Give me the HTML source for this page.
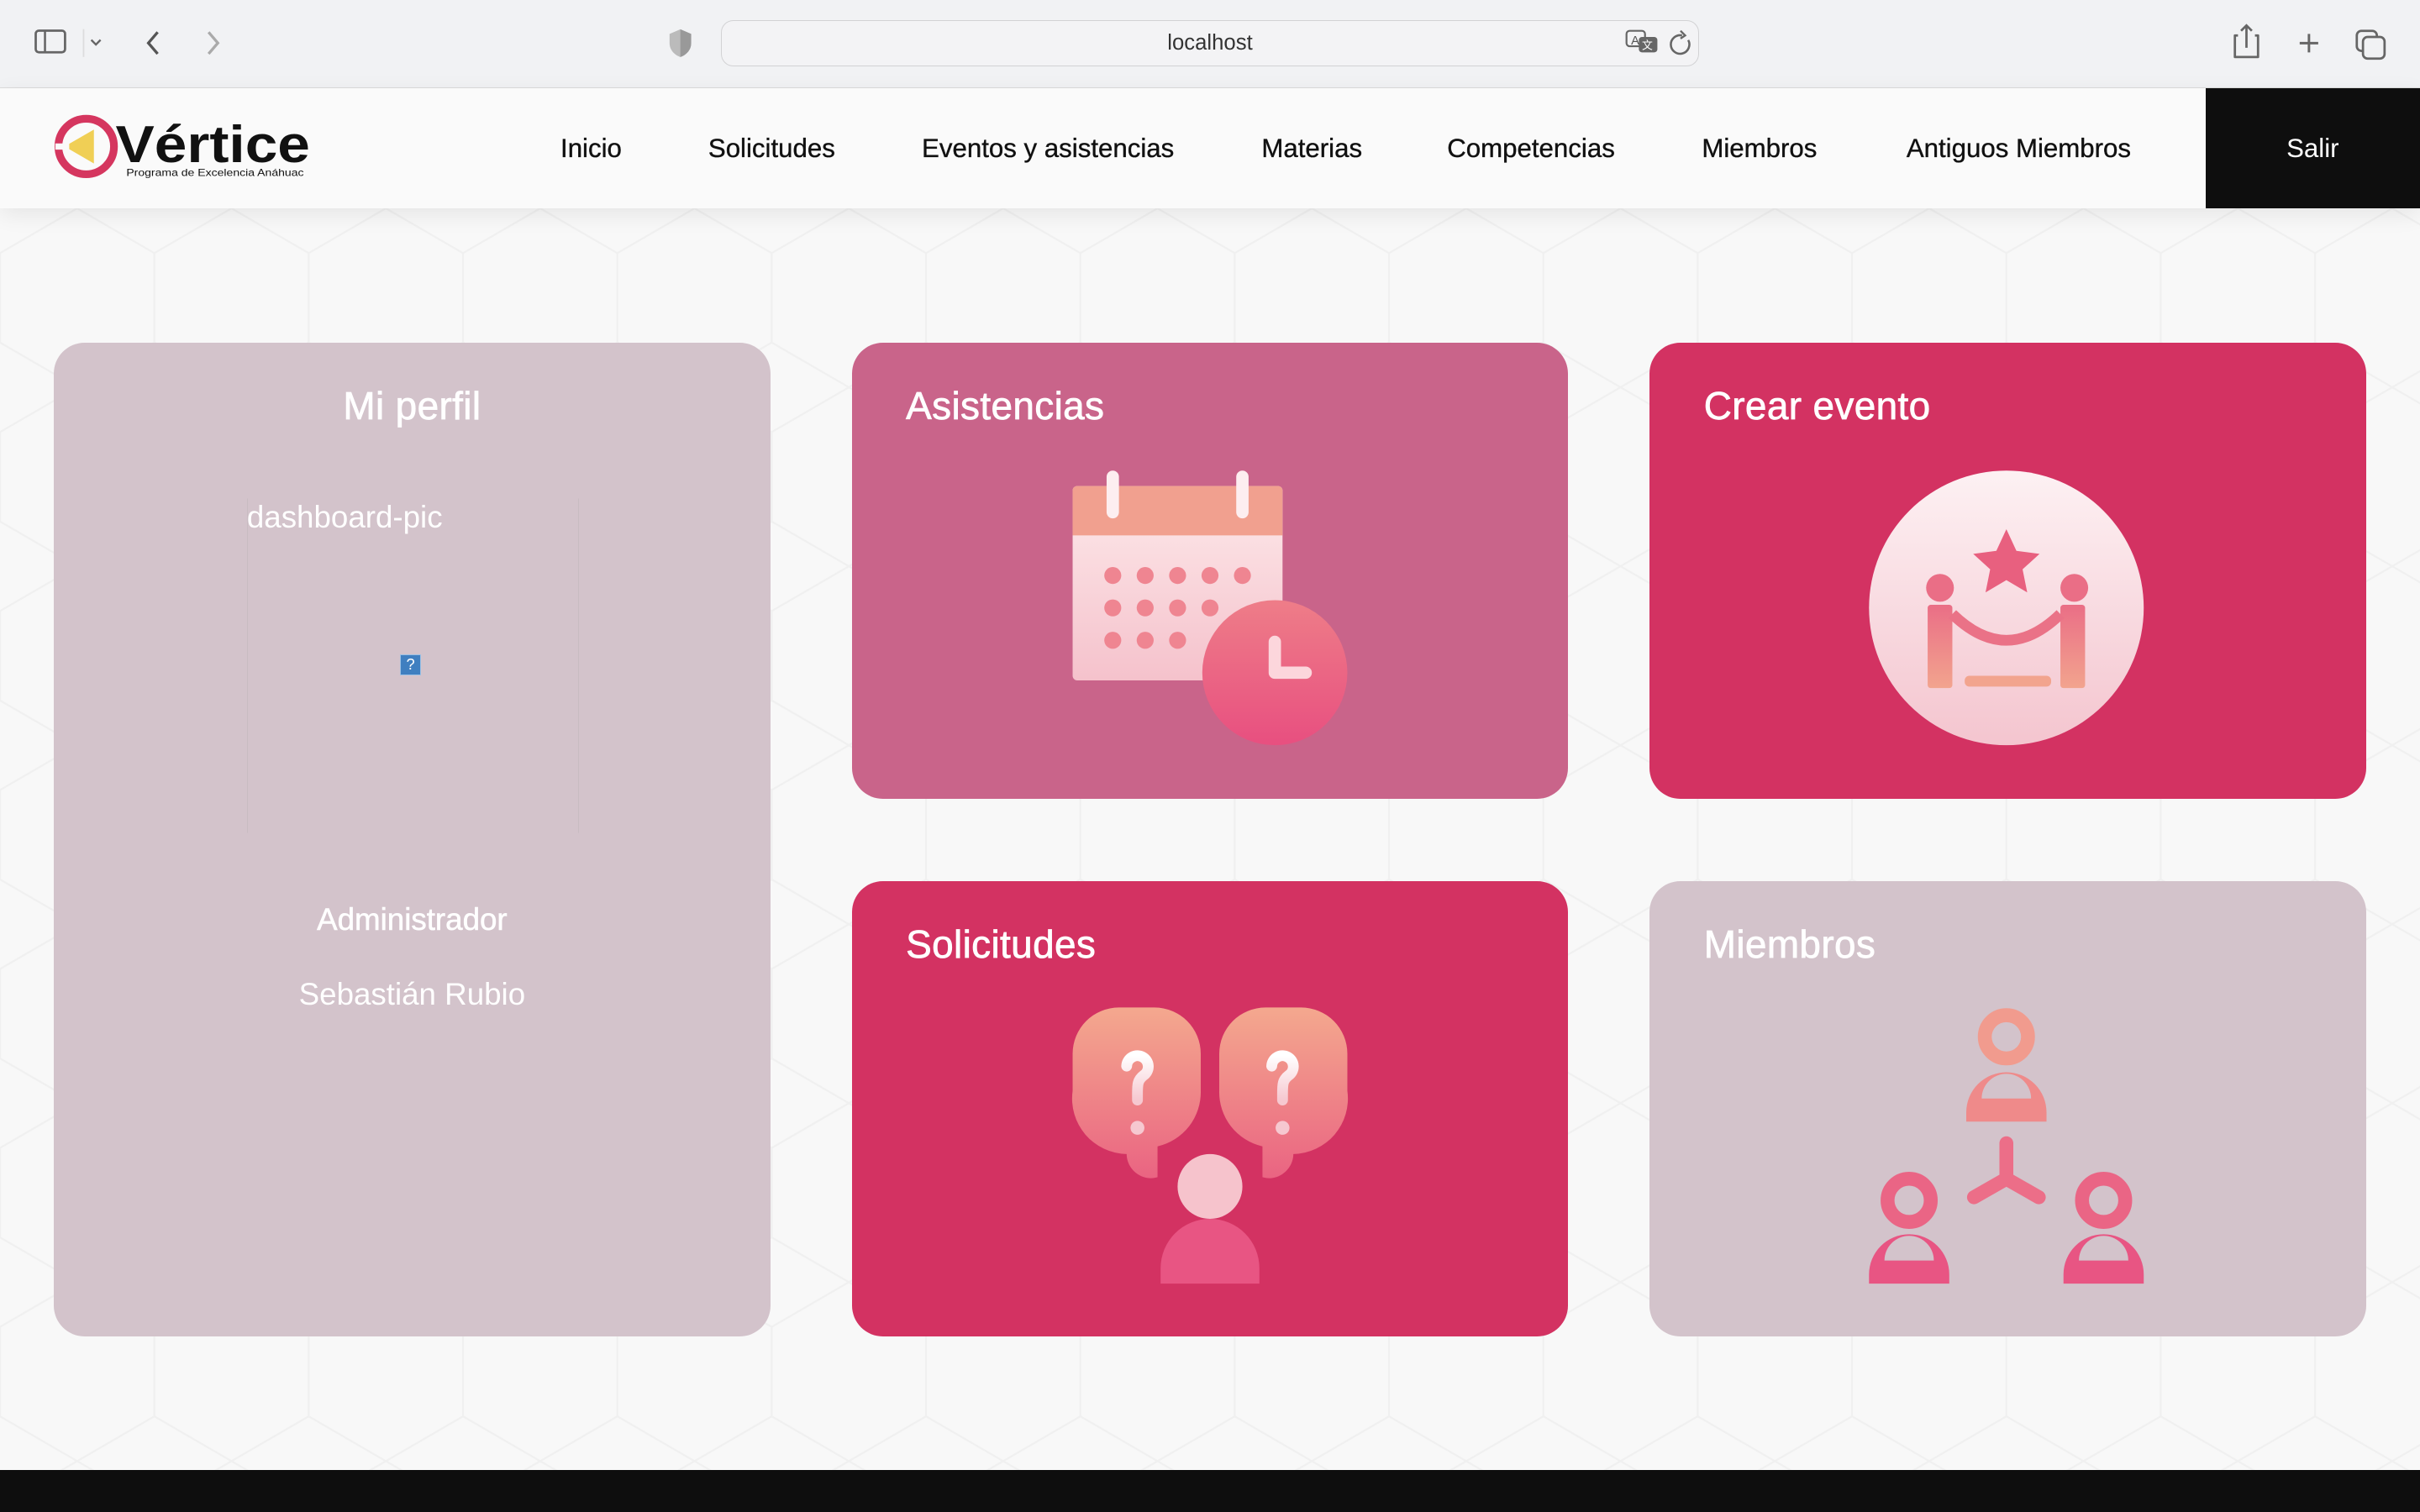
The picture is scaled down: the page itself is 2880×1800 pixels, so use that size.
<!DOCTYPE html>
<html><head><meta charset="utf-8"><style>
html,body{margin:0;padding:0;width:2880px;height:1800px;overflow:hidden;background:#f8f8f8}
#w{zoom:1.836735;width:1568px;height:980px;position:relative;font-family:"Liberation Sans",sans-serif;overflow:hidden}
.abs{position:absolute}
.chrome{left:0;top:0;width:1568px;height:57px;background:#f1f2f4;border-bottom:1px solid #dcdcdc;box-sizing:border-box}
.url{left:467px;top:13px;width:634px;height:30px;border:1px solid #d2d2d4;border-radius:8px;box-sizing:border-box;background:#f3f3f5;text-align:center;font-size:14px;line-height:29px;color:#333}
.nav{left:0;top:57px;width:1568px;height:78px;background:#fafafa;box-shadow:0 4px 14px rgba(0,0,0,.08)}
.nav span{position:absolute;top:0;line-height:78px;font-size:17px;color:#111;transform:translateX(-50%);white-space:nowrap;-webkit-text-stroke:0.2px #111}
.salir{left:1429px;top:57px;width:139px;height:78px;background:#0e0e0e;color:#fff;font-size:17px;line-height:78px;text-align:center}
.card{border-radius:20px;width:464px;color:#fff}
.card h2{margin:0;position:absolute;left:35px;top:26px;font-size:25px;font-weight:normal;letter-spacing:.2px;-webkit-text-stroke:0.4px #fff}
.foot{left:0;top:953px;width:1568px;height:27px;background:#0e0e0e}
</style></head><body><div id="w">
<svg class="abs" style="left:0;top:135px" width="1568" height="818" viewBox="0 0 1568 818">
<defs><pattern id="hx" width="100" height="116" patternUnits="userSpaceOnUse">
<path d="M0 29 L50 0 L100 29 M50 0 V-29 M0 29 V87 L50 116 L100 87 V29 M50 116 V145" fill="none" stroke="#f0f0f0" stroke-width="1.2"/></pattern></defs>
<rect width="1568" height="818" fill="url(#hx)"/></svg>

<div class="abs chrome"></div>
<svg class="abs" style="left:20px;top:17px" width="140" height="22" viewBox="0 0 140 22">
<rect x="3" y="3" width="19" height="14" rx="2" fill="none" stroke="#666" stroke-width="1.5"/><line x1="9" y1="3" x2="9" y2="17" stroke="#666" stroke-width="1.4"/>
<line x1="34" y1="2" x2="34" y2="20" stroke="#ddd"/><path d="M39 9 l3 3 l3 -3" fill="none" stroke="#666" stroke-width="1.3"/>
<path d="M82 4 l-6 7 l6 7" fill="none" stroke="#555" stroke-width="1.8"/><path d="M115 4 l6 7 l-6 7" fill="none" stroke="#aaa" stroke-width="1.8"/></svg>
<svg class="abs" style="left:433px;top:18px" width="16" height="20"><path d="M8 1 L15 4 V10 C15 15 11 18 8 19 C5 18 1 15 1 10 V4 Z" fill="#bbb"/><path d="M8 1 V19 C11 18 15 15 15 10 V4 Z" fill="#999"/></svg>
<div class="abs url">localhost</div>
<svg class="abs" style="left:1052px;top:18px" width="46" height="22"><rect x="2" y="2" width="12" height="10" rx="2" fill="#f3f3f5" stroke="#666" stroke-width="1.2"/><text x="5" y="11" font-size="8" fill="#555" font-family="Liberation Sans">A</text><rect x="10" y="6" width="12" height="10" rx="2" fill="#666"/><text x="12" y="14" font-size="7" fill="#fff">文</text><path d="M42 8 A6 6 0 1 1 38 5" fill="none" stroke="#666" stroke-width="1.4"/><path d="M37 2 l3 3 l-3 2" fill="none" stroke="#666" stroke-width="1.3"/></svg>
<svg class="abs" style="left:1440px;top:12px" width="110" height="30" viewBox="0 0 110 30">
<path d="M10 11 H8 V25 H23 V11 H21" fill="none" stroke="#666" stroke-width="1.5" stroke-linejoin="round"/><path d="M15.5 19 V5 M12 8 l3.5-3.5 l3.5 3.5" fill="none" stroke="#666" stroke-width="1.5"/>
<path d="M56 10 V22 M50 16 H62" stroke="#666" stroke-width="1.6"/>
<rect x="87" y="8" width="13" height="13" rx="3" fill="none" stroke="#666" stroke-width="1.5"/><rect x="91" y="12" width="14" height="14" rx="3" fill="#f1f2f4" stroke="#666" stroke-width="1.5"/></svg>

<div class="abs nav">
<svg style="position:absolute;left:35px;top:16px" width="170" height="46" viewBox="0 0 170 46">
<circle cx="21" cy="22" r="18" fill="none" stroke="#d5365f" stroke-width="5"/><path d="M7 22 L26 11 V33 Z" fill="#f0cf55"/><path d="M1 22 L10 22" stroke="#fafafa" stroke-width="4"/>
<text x="40" y="32" font-size="34" font-weight="bold" font-family="Liberation Sans" fill="#111" textLength="126" lengthAdjust="spacingAndGlyphs">Vértice</text>
<text x="47" y="41" font-size="6.5" fill="#111" font-family="Liberation Sans" textLength="115" lengthAdjust="spacingAndGlyphs">Programa de Excelencia Anáhuac</text></svg>
<span style="left:383px">Inicio</span><span style="left:500px">Solicitudes</span><span style="left:679px">Eventos y asistencias</span><span style="left:850px">Materias</span><span style="left:992px">Competencias</span><span style="left:1140px">Miembros</span><span style="left:1308px">Antiguos Miembros</span>
</div>
<div class="abs salir">Salir</div>

<div class="abs card" style="left:35px;top:222px;height:644px;background:#d3c3cb">
<h2 style="left:0;width:464px;text-align:center">Mi perfil</h2>
<div style="position:absolute;left:125px;top:101px;width:215px;height:217px;border:1px solid #c8bcc2;box-sizing:border-box;border-top-color:transparent;border-bottom-color:transparent"></div>
<div style="position:absolute;left:125px;top:102px;font-size:20px">dashboard-pic</div>
<div style="position:absolute;left:224px;top:202px;width:14px;height:14px;background:#3f7fc0;border:1px solid #9cc1e4;box-sizing:border-box;font-size:10px;line-height:12px;text-align:center">?</div>
<div style="position:absolute;left:0;width:464px;top:363px;text-align:center;font-size:20px;-webkit-text-stroke:0.3px #fff">Administrador</div>
<div style="position:absolute;left:0;width:464px;top:411px;text-align:center;font-size:20px">Sebastián Rubio</div>
</div>

<div class="abs card" style="left:552px;top:222px;height:296px;background:#c9648a"><h2>Asistencias</h2></div>
<div class="abs card" style="left:1069px;top:222px;height:296px;background:#d33262"><h2>Crear evento</h2></div>
<div class="abs card" style="left:552px;top:571px;height:295px;background:#d33262"><h2>Solicitudes</h2></div>
<div class="abs card" style="left:1069px;top:571px;height:295px;background:#d3c3cb"><h2>Miembros</h2></div>

<svg class="abs" style="left:0;top:0" width="1568" height="980" viewBox="0 0 1568 980">
<defs>
<linearGradient id="cb" x1="0" y1="0" x2="0" y2="1"><stop offset="0" stop-color="#fde9ea"/><stop offset="1" stop-color="#f5c2cc"/></linearGradient>
<linearGradient id="ck" x1="0" y1="0" x2="0" y2="1"><stop offset="0" stop-color="#ee7d88"/><stop offset="1" stop-color="#e84f80"/></linearGradient>
<linearGradient id="ce" x1="0" y1="0" x2="0" y2="1"><stop offset="0" stop-color="#fdf1f3"/><stop offset="1" stop-color="#f4c5cf"/></linearGradient>
<linearGradient id="po" x1="0" y1="0" x2="0" y2="1"><stop offset="0" stop-color="#ea6e86"/><stop offset="1" stop-color="#f2a48e"/></linearGradient>
<linearGradient id="bu" x1="0" y1="0" x2="0" y2="1"><stop offset="0" stop-color="#f4a88e"/><stop offset="1" stop-color="#ea6482"/></linearGradient>
<linearGradient id="qm" x1="0" y1="0" x2="0" y2="1"><stop offset="0" stop-color="#fff"/><stop offset="1" stop-color="#f6c8d0"/></linearGradient>
</defs>
<rect x="695" y="315" width="136" height="126" rx="3" fill="url(#cb)"/>
<path d="M698 315 H828 a3 3 0 0 1 3 3 V347 H695 V318 a3 3 0 0 1 3-3Z" fill="#f1a08f"/>
<line x1="721" y1="309" x2="721" y2="332" stroke="#fdeef0" stroke-width="8" stroke-linecap="round"/>
<line x1="805" y1="309" x2="805" y2="332" stroke="#fdeef0" stroke-width="8" stroke-linecap="round"/>
<g fill="#ef8591"><circle cx="721" cy="373" r="5.5"/><circle cx="742" cy="373" r="5.5"/><circle cx="763" cy="373" r="5.5"/><circle cx="784" cy="373" r="5.5"/><circle cx="805" cy="373" r="5.5"/>
<circle cx="721" cy="394" r="5.5"/><circle cx="742" cy="394" r="5.5"/><circle cx="763" cy="394" r="5.5"/><circle cx="784" cy="394" r="5.5"/>
<circle cx="721" cy="415" r="5.5"/><circle cx="742" cy="415" r="5.5"/><circle cx="763" cy="415" r="5.5"/></g>
<circle cx="826" cy="436" r="47" fill="url(#ck)"/>
<path d="M826 416 V436 H846" fill="none" stroke="#fcd6dc" stroke-width="8" stroke-linecap="round" stroke-linejoin="round"/>
<circle cx="1300" cy="394" r="89" fill="url(#ce)"/>
<path d="M1300 343 l6.5 14 l15 2 l-11 10 l3 15 l-13.5-8 l-13.5 8 l3-15 l-11-10 l15-2Z" fill="#e8607f"/>
<circle cx="1257" cy="381" r="9" fill="#ea6e86"/><circle cx="1344" cy="381" r="9" fill="#ea6e86"/>
<rect x="1249" y="392" width="16" height="54" rx="2" fill="url(#po)"/><rect x="1335" y="392" width="16" height="54" rx="2" fill="url(#po)"/>
<path d="M1265 398 Q1300 432 1335 398" fill="none" stroke="#ea7287" stroke-width="7"/>
<rect x="1273" y="438" width="56" height="7" rx="3" fill="#f2a48e"/>
<path d="M725 653 h23 a30 30 0 0 1 30 30 v24 a36 36 0 0 1 -28 36 v20 c-10 3 -20 -5 -20 -15 a36 36 0 0 1 -35 -41 v-24 a30 30 0 0 1 30 -30Z" fill="url(#bu)"/>
<path d="M820 653 h23 a30 30 0 0 1 30 30 v24 a36 36 0 0 1 -35 41 c0 10 -10 18 -20 15 v-20 a36 36 0 0 1 -28 -36 v-24 a30 30 0 0 1 30 -30Z" fill="url(#bu)"/>
<path d="M730 691 a7 7 0 1 1 11 6 c-4 3 -4 6 -4 12 v4" fill="none" stroke="url(#qm)" stroke-width="7" stroke-linecap="round"/>
<circle cx="737" cy="731" r="4.5" fill="#f6c8d0"/>
<path d="M824 691 a7 7 0 1 1 11 6 c-4 3 -4 6 -4 12 v4" fill="none" stroke="url(#qm)" stroke-width="7" stroke-linecap="round"/>
<circle cx="831" cy="731" r="4.5" fill="#f6c8d0"/>
<circle cx="784" cy="769" r="21" fill="#f6c3cc"/>
<path d="M752 832 V822 a32 32 0 0 1 64 0 V832Z" fill="#e85583"/>
<g fill="none" stroke-width="9">
<circle cx="1300" cy="672" r="14" stroke="#f19b8e"/>
<circle cx="1237" cy="778" r="14" stroke="#ea6585"/>
<circle cx="1363" cy="778" r="14" stroke="#ea6585"/>
<path d="M1300 741 V764 M1300 764 L1279 776 M1300 764 L1321 776" stroke="#ec6e88" stroke-linecap="round"/>
</g>
<path d="M1274 727 v-6 a26 26 0 0 1 52 0 v6Z M1284 712 h32 a16 16 0 0 0 -32 0Z" fill="#ef8a8a" fill-rule="evenodd"/>
<path d="M1211 832 v-6 a26 26 0 0 1 52 0 v6Z M1221 817 h32 a16 16 0 0 0 -32 0Z" fill="#e85583" fill-rule="evenodd"/>
<path d="M1337 832 v-6 a26 26 0 0 1 52 0 v6Z M1347 817 h32 a16 16 0 0 0 -32 0Z" fill="#e85583" fill-rule="evenodd"/>
</svg>
<div class="abs foot"></div>
</div></body></html>
